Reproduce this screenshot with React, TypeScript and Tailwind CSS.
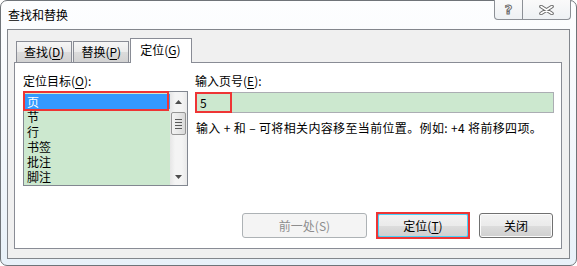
import type { ReactNode } from 'react'

const ITEMS = ['页', '节', '行', '书签', '批注', '脚注']

function Key({ children }: { children: ReactNode }) {
  return <span className="underline underline-offset-[2px]">{children}</span>
}

function Tab({ active, children }: { active?: boolean; children: ReactNode }) {
  if (active) {
    return (
      <div className="h-[25px] w-[62px] border border-b-0 border-[#898c95] bg-white pl-[9px] pt-[3px] leading-[16px] text-black">
        {children}
      </div>
    )
  }
  return (
    <div className="mb-px h-[21px] border border-b-0 border-[#898c95] bg-[linear-gradient(to_bottom,#f6f6f6_0%,#ebebeb_50%,#dcdcdc_51%,#d2d2d2_100%)] px-[7px] pt-[2px] leading-[16px] text-black">
      {children}
    </div>
  )
}

function WinButton({
  width,
  disabled,
  focused,
  children,
}: {
  width: string
  disabled?: boolean
  focused?: boolean
  children: ReactNode
}) {
  if (disabled) {
    return (
      <div
        className={`${width} flex h-[25px] items-center justify-center rounded-[3px] border border-[#adb2b5] bg-[#f4f4f4] leading-[16px] text-[#8d8d8d]`}
      >
        {children}
      </div>
    )
  }
  return (
    <div className={`relative ${width}`}>
      <div
        className={`flex h-[25px] items-center justify-center rounded-[3px] border ${
          focused ? 'border-[#3c7fb1] shadow-[inset_0_0_0_1px_#48d3fb]' : 'border-[#707070] shadow-[inset_0_0_0_1px_#fbfbfb]'
        } bg-[linear-gradient(to_bottom,#f2f2f2_0%,#ebebeb_50%,#dddddd_51%,#cfcfcf_100%)] leading-[16px] text-black`}
      >
        {children}
      </div>
      {focused && <div className="absolute -inset-[1px] border-2 border-[#ee3535]" />}
    </div>
  )
}

function ScrollBar() {
  return (
    <div className="flex w-[17px] flex-col bg-[linear-gradient(to_right,#e6e6e6,#f4f4f4_30%,#f4f4f4_70%,#e9e9e9)]">
      <div className="flex h-[17px] items-center justify-center pt-[2px]">
        <svg width="7" height="4" viewBox="0 0 7 4">
          <path d="M0 4 L3.5 0 L7 4 Z" fill="#4d4d4d" />
        </svg>
      </div>
      <div className="flex-1 px-[1px] pt-[3px]">
        <div className="flex h-[23px] flex-col items-center justify-center gap-[2px] rounded-[2px] border border-[#959595] bg-[linear-gradient(to_right,#f3f3f3,#e8e8e8_50%,#d9d9d9)]">
          <div className="h-px w-[7px] bg-[#5a5a5a]" />
          <div className="h-px w-[7px] bg-[#5a5a5a]" />
          <div className="h-px w-[7px] bg-[#5a5a5a]" />
          <div className="h-px w-[7px] bg-[#5a5a5a]" />
        </div>
      </div>
      <div className="flex h-[17px] items-center justify-center">
        <svg width="7" height="4" viewBox="0 0 7 4">
          <path d="M0 0 L3.5 4 L7 0 Z" fill="#4d4d4d" />
        </svg>
      </div>
    </div>
  )
}

export default function App() {
  return (
    <div className="font-['Noto_Sans_CJK_SC',sans-serif] text-[12px]">
      <div className="flex h-[266px] w-[577px] flex-col rounded-[7px] border border-[#6f7479] bg-[linear-gradient(to_bottom,#fdfeff_0%,#f6f9fc_40%,#e8f1f9_100%)]">
        {/* title bar */}
        <div className="flex h-[28px] items-start justify-between">
          <div className="pl-[7px] pt-[6px] leading-[16px] text-black">查找和替换</div>
          <div className="mr-[5px] -mt-px flex h-[20px] rounded-b-[4px] border border-t-0 border-[#8c9096] bg-[linear-gradient(to_bottom,#fafafa,#eef1f4)]">
            <div className="flex w-[28px] items-center justify-center border-r border-[#8c9096]">
              <span className="font-['DejaVu_Sans',sans-serif] text-[13px] font-bold leading-none text-white [-webkit-text-stroke:1px_#6b6b6b]">
                ?
              </span>
            </div>
            <div className="flex w-[47px] items-center justify-center">
              <svg width="15" height="10" viewBox="0 0 15 10">
                <path d="M2 1.5 L13 8.5 M13 1.5 L2 8.5" stroke="#6b6b6b" strokeWidth="3.6" strokeLinecap="round" />
                <path d="M2 1.5 L13 8.5 M13 1.5 L2 8.5" stroke="#ffffff" strokeWidth="1.6" strokeLinecap="round" />
              </svg>
            </div>
          </div>
        </div>

        {/* client area */}
        <div className="mx-[6px] mb-[6px] flex flex-1 flex-col border border-[#82868c] bg-[#f0f0f0]">
          <div className="relative z-10 -mb-px flex items-end pl-[8px] pt-[8px]">
            <Tab>
              查找(<Key>D</Key>)
            </Tab>
            <div className="w-px" />
            <Tab>
              替换(<Key>P</Key>)
            </Tab>
            <div className="w-px" />
            <Tab active>
              定位(<Key>G</Key>)
            </Tab>
          </div>

          <div className="mb-[9px] ml-[6px] mr-[7px] flex flex-1 flex-col border border-[#898c95] bg-white">
            <div className="flex pl-[8px] pr-[7px] pt-[10px]">
              {/* left column */}
              <div className="flex flex-col">
                <div className="leading-[16px] text-black">
                  定位目标(<Key>O</Key>):
                </div>
                <div className="relative mt-[2px]">
                  <div className="flex h-[95px] w-[165px] border border-[#828790] bg-[#cce8cf]">
                    <div className="flex-1 overflow-hidden pt-[2px]">
                      {ITEMS.map((item, i) => (
                        <div
                          key={item}
                          className={`h-[15px] pl-[3px] leading-[15px] ${
                            i === 0 ? 'bg-[#3399ff] text-white' : 'text-black'
                          }`}
                        >
                          {item}
                        </div>
                      ))}
                    </div>
                    <ScrollBar />
                  </div>
                  <div className="absolute left-0 top-0 h-[20px] w-[146px] border-2 border-[#ee3535]" />
                </div>
              </div>

              {/* right column */}
              <div className="ml-[7px] flex flex-1 flex-col">
                <div className="leading-[16px] text-black">
                  输入页号(<Key>E</Key>):
                </div>
                <div className="relative mt-[3px]">
                  <div className="h-[21px] border border-[#abadb3] bg-[#cce8cf] pl-[4px] leading-[19px] text-black">
                    5
                  </div>
                  <div className="absolute left-0 top-0 h-[21px] w-[37px] border-2 border-[#ee3535]" />
                </div>
                <div className="mt-[7px] pl-[1px] leading-[16px] tracking-[0.35px] text-black">
                  输入 + 和 – 可将相关内容移至当前位置。例如: +4 将前移四项。
                </div>
              </div>
            </div>

            <div className="flex-1" />

            <div className="flex justify-end gap-[10px] pb-[10px] pr-[8px]">
              <WinButton width="w-[125px]" disabled>
                前一处(S)
              </WinButton>
              <WinButton width="w-[92px]" focused>
                定位(<Key>T</Key>)
              </WinButton>
              <WinButton width="w-[74px]">关闭</WinButton>
            </div>
          </div>
        </div>
      </div>
    </div>
  )
}
